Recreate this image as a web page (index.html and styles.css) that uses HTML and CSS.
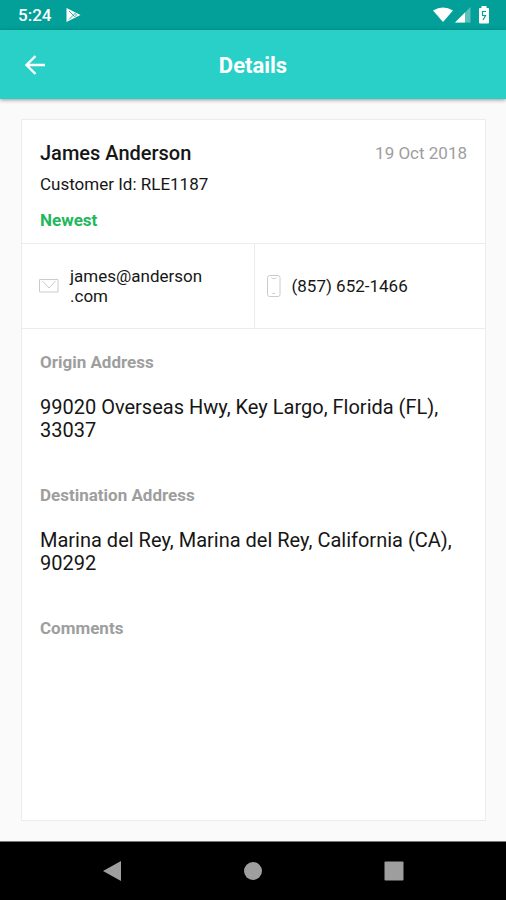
FILE: index.html
```html
<!DOCTYPE html>
<html lang="en">
<head>
<meta charset="utf-8">
<meta name="viewport" content="width=device-width, initial-scale=1">
<title>Details</title>
<link rel="stylesheet" href="styles.css">
</head>
<body>
<div class="status-bar">
  <div class="status-group status-start">
    <span class="clock">5:24</span>
    <svg width="16" height="16" viewBox="0 0 16 16" aria-hidden="true">
      <path d="M1.500 1v14L15.500 8z" fill="#fff"/>
      <path d="M4 4l5.500 5.500M4 12.500l6-6M9.500 6l2 2-2 2" fill="none" stroke="#02a098" stroke-width=".8"/>
    </svg>
  </div>
  <div class="status-group status-end">
    <svg width="20" height="16" viewBox="0 0 20 16" aria-hidden="true">
      <path d="M0 3.500Q10-2.500 20 3.500L10 15z" fill="#fff"/>
    </svg>
    <svg width="16" height="16" viewBox="0 0 16 16" aria-hidden="true">
      <path d="M15.500 0v15.500H0z" fill="#fff" opacity=".35"/>
      <path d="M10 5.500v10H0z" fill="#fff"/>
    </svg>
    <svg class="battery" width="12" height="18" viewBox="0 0 12 18" aria-hidden="true">
      <path d="M3.500 0h5v2H10q1 0 1 1v13.500q0 1-1 1H2q-1 0-1-1V3q0-1 1-1h1.500z" fill="#fff"/>
      <path d="M8 5.500H4.500v4h3L5 14" fill="none" stroke="#02a098" stroke-width="1.200"/>
    </svg>
  </div>
</div>
<header class="app-bar">
  <button class="back" type="button" aria-label="Back">
    <svg width="24" height="24" viewBox="0 0 24 24" aria-hidden="true">
      <path d="M22 12H4M12.500 3L3.500 12l9 9" fill="none" stroke="#fff" stroke-width="2.400"/>
    </svg>
  </button>
  <h1 class="title">Details</h1>
</header>
<main class="content">
  <article class="card">
    <section class="summary">
      <div class="summary-top">
        <h2 class="name">James Anderson</h2>
        <time class="date" datetime="2018-10-19">19 Oct 2018</time>
      </div>
      <p class="customer">Customer Id: RLE1187</p>
      <p class="state">Newest</p>
    </section>
    <section class="contacts">
      <a class="contact" href="mailto:james@anderson.com">
        <svg class="contact-icon" width="20" height="14" viewBox="0 0 20 14" aria-hidden="true">
          <path d="M.5.5h18.500v12.500H.5zM3.500 2l6.500 7 6.500-7" fill="none" stroke="#ccc"/>
        </svg>
        <span>james@anderson<wbr>.com</span>
      </a>
      <a class="contact contact-phone" href="tel:+18576521466">
        <svg class="contact-icon" width="14" height="22" viewBox="0 0 14 22" aria-hidden="true">
          <rect x=".5" y=".5" width="12.500" height="21" rx="2" fill="none" stroke="#ccc"/>
          <path d="M4.500 2.500l1 1h3l1-1M5.500 18.500h2.500" fill="none" stroke="#ccc"/>
        </svg>
        <span>(857) 652-1466</span>
      </a>
    </section>
    <section class="details">
      <div class="field">
        <h3 class="label">Origin Address</h3>
        <p class="address">99020 Overseas Hwy, Key Largo, Florida (FL), 33037</p>
      </div>
      <div class="field">
        <h3 class="label">Destination Address</h3>
        <p class="address">Marina del Rey, Marina del Rey, California (CA), 90292</p>
      </div>
      <div class="field">
        <h3 class="label">Comments</h3>
      </div>
    </section>
  </article>
</main>
<nav class="nav-bar" aria-label="System">
  <button type="button" aria-label="Back">
    <svg width="20" height="22" viewBox="0 0 20 22" aria-hidden="true"><path d="M19 1v20L1 11z" fill="#9e9e9e"/></svg>
  </button>
  <button type="button" aria-label="Home">
    <svg width="20" height="20" viewBox="0 0 20 20" aria-hidden="true"><circle cx="10" cy="10" r="9" fill="#9e9e9e"/></svg>
  </button>
  <button type="button" aria-label="Recent apps">
    <svg width="20" height="20" viewBox="0 0 20 20" aria-hidden="true"><rect x=".5" y=".5" width="19" height="19" rx="1" fill="#9e9e9e"/></svg>
  </button>
</nav>
</body>
</html>
```
FILE: styles.css
```css
* {
  box-sizing: border-box;
}

body {
  display: flex;
  flex-direction: column;
  min-height: 100vh;
  margin: 0;
  background: #fafafa;
  color: #161616;
  font-family: Roboto, "Liberation Sans", sans-serif;
  font-size: 17px;
  line-height: 24px;
}

h1,
h2,
h3,
p {
  margin: 0;
}

button {
  display: flex;
  align-items: center;
  justify-content: center;
  padding: 0;
  border: 0;
  background: none;
}

svg {
  display: block;
  flex: none;
}

.status-bar {
  display: flex;
  align-items: center;
  justify-content: space-between;
  height: 30px;
  padding: 0 16px 0 18px;
  background: #02a098;
  color: #fff;
}

.status-group {
  display: flex;
  align-items: center;
}

.status-start {
  gap: 14px;
}

.status-end {
  gap: 2px;
}

.battery {
  margin-left: 5px;
}

.clock {
  font-weight: 500;
}

.app-bar {
  display: grid;
  grid-template-columns: 70px 1fr 70px;
  align-items: center;
  height: 69px;
  background: #28d0c8;
  box-shadow: 0 1px 4px rgba(0, 0, 0, 0.4);
  color: #fff;
}

.back {
  height: 48px;
}

.title {
  padding-top: 2px;
  font-size: 22px;
  font-weight: 700;
  text-align: center;
}

.content {
  display: flex;
  flex: 1;
  padding: 20px 20px 20px 21px;
}

.card {
  flex: 1;
  min-width: 0;
  border: 1px solid #ececec;
  background: #fff;
}

.summary {
  padding: 21px 18px 11px;
}

.summary-top {
  display: flex;
  justify-content: space-between;
}

.name {
  font-size: 20px;
  font-weight: 500;
}

.date {
  color: #9e9e9e;
}

.customer {
  margin-top: 7px;
}

.state {
  margin-top: 12px;
  color: #1fb85c;
  font-weight: 700;
}

.contacts {
  display: grid;
  grid-template-columns: 1fr 1fr;
  border: solid #ececec;
  border-width: 1px 0;
}

.contact {
  display: flex;
  align-items: center;
  gap: 11px;
  min-height: 84px;
  padding: 0 18px 0 17px;
  color: inherit;
  line-height: 20px;
  text-decoration: none;
}

.contact-phone {
  padding-left: 12px;
  border-left: 1px solid #ececec;
}

.details {
  display: flex;
  flex-direction: column;
  gap: 41px;
  padding: 21px 18px;
}

.label {
  color: #9e9e9e;
  font-size: 17px;
  font-weight: 700;
}

.address {
  margin-top: 22px;
  font-size: 20px;
  line-height: 23px;
}

.nav-bar {
  display: grid;
  grid-template-columns: repeat(3, 1fr);
  height: 59px;
  padding: 0 42px;
  border-top: 1px solid #777;
  background: #000;
}
```
